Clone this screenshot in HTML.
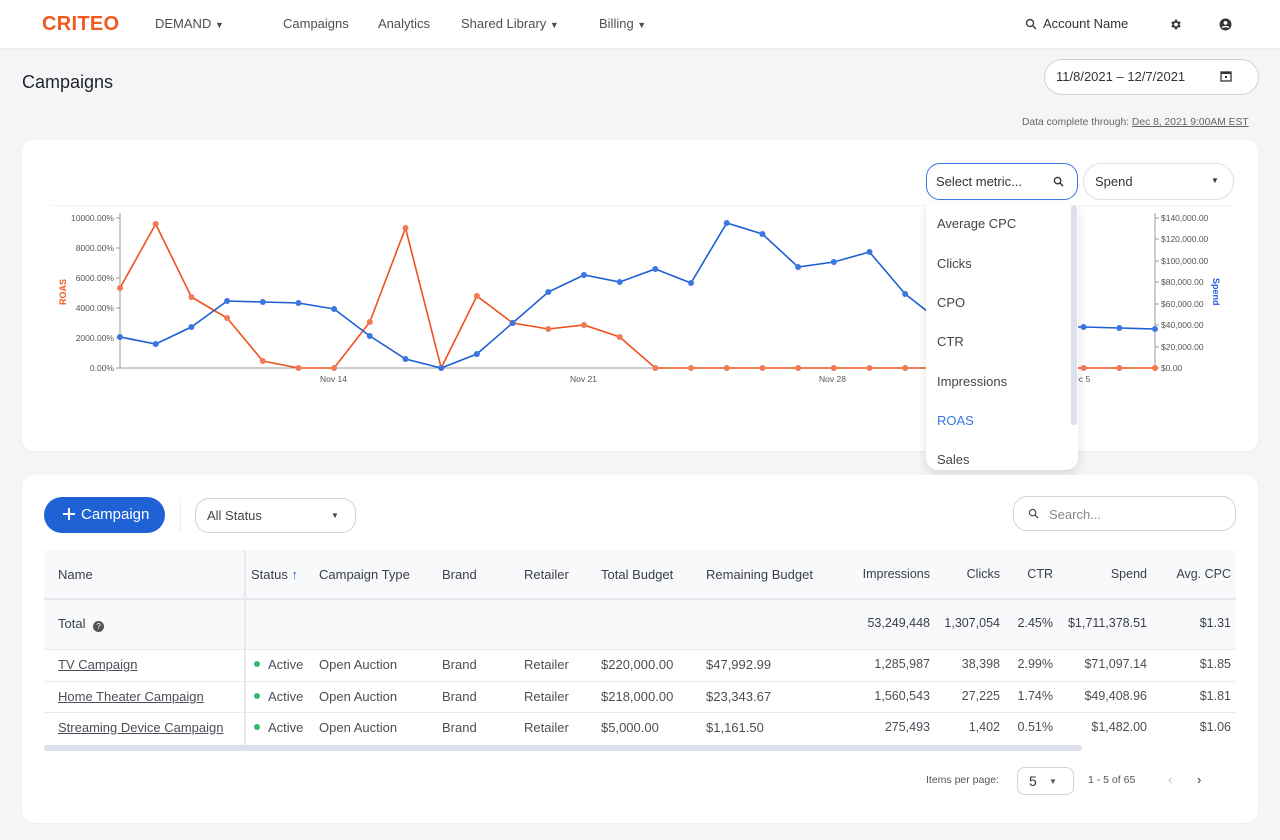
<!DOCTYPE html>
<html><head><meta charset="utf-8"><style>
*{margin:0;padding:0;box-sizing:border-box}
body{width:1280px;height:840px;background:#f4f5f7;font-family:"Liberation Sans",sans-serif;color:#2e3440;position:relative;overflow:hidden;font-size:13px}
.t{position:absolute;white-space:nowrap}
.r{text-align:right;font-size:12.5px}
.card{position:absolute;background:#fff;border-radius:12px;box-shadow:0 1px 2px rgba(0,0,0,.04)}
.u{text-decoration:underline}
.g{color:#4a4f57}
</style></head><body>
<div style="position:absolute;left:0;top:0;width:1280px;height:49px;background:#fff;border-bottom:1px solid #eceef1"></div>
<div class="t" style="left:42px;top:13px;font-size:20px;font-weight:bold;color:#f05a1e;letter-spacing:0.3px">CRITEO</div>
<div class="t g" style="left:155px;top:16px;font-size:13px">DEMAND <span style="font-size:9px">▼</span></div>
<div class="t g" style="left:283px;top:16px">Campaigns</div>
<div class="t g" style="left:378px;top:16px">Analytics</div>
<div class="t g" style="left:461px;top:16px">Shared Library <span style="font-size:9px">▼</span></div>
<div class="t g" style="left:599px;top:16px">Billing <span style="font-size:9px">▼</span></div>
<svg class="t" style="left:1025px;top:18px" width="12" height="12" viewBox="0 0 12 12"><circle cx="5" cy="5" r="3.5" fill="none" stroke="#444" stroke-width="1.4"/><path d="M7.5 7.5L11 11" stroke="#444" stroke-width="1.5"/></svg>
<div class="t" style="left:1043px;top:16px;color:#333">Account Name</div>
<svg class="t" style="left:1169px;top:18px" width="13" height="13" viewBox="0 0 24 24"><path fill="#333" d="M19.4 13a7.5 7.5 0 000-2l2.1-1.6-2-3.5-2.5 1a7 7 0 00-1.7-1L14.9 3h-4l-.4 2.9a7 7 0 00-1.7 1l-2.5-1-2 3.5L6.4 11a7.5 7.5 0 000 2l-2.1 1.6 2 3.5 2.5-1a7 7 0 001.7 1l.4 2.9h4l.4-2.9a7 7 0 001.7-1l2.5 1 2-3.5zM12.9 15.5a3.5 3.5 0 110-7 3.5 3.5 0 010 7z"/></svg>
<svg class="t" style="left:1219px;top:18px" width="13" height="13" viewBox="0 0 24 24"><circle cx="12" cy="12" r="11" fill="#333"/><circle cx="12" cy="9" r="3.5" fill="#fff"/><path d="M5.5 18c2-3 11-3 13 0" stroke="#fff" stroke-width="2.5" fill="none"/></svg>

<div class="t" style="left:22px;top:72px;font-size:18px;color:#1f2328">Campaigns</div>
<div class="t" style="left:1044px;top:59px;width:215px;height:36px;border:1px solid #cfd3d9;border-radius:18px;background:#fff"></div>
<div class="t" style="left:1056px;top:69px;color:#333">11/8/2021 – 12/7/2021</div>
<svg class="t" style="left:1220px;top:70px" width="12" height="12" viewBox="0 0 12 12"><rect x="1" y="2" width="10" height="9" fill="none" stroke="#333" stroke-width="1.3"/><rect x="1" y="2" width="10" height="2" fill="#333"/><rect x="5" y="6" width="2" height="2" fill="#333"/></svg>
<div class="t" style="left:1022px;top:117px;font-size:10.3px;color:#666">Data complete through: <span class="u">Dec 8, 2021 9:00AM EST</span></div>

<div class="card" style="left:22px;top:140px;width:1236px;height:311px"></div>
<div class="t" style="left:1083px;top:163px;width:151px;height:37px;border:1px solid #dde0e6;border-radius:18px;background:#fff"></div>
<div class="t" style="left:1095px;top:174px;color:#333">Spend</div>
<div class="t" style="left:1211px;top:176px;font-size:8px;color:#333">▼</div>
<div class="t" style="left:52px;top:205px;width:1180px;height:1px;background:#f0f1f4"></div>
<svg class="t" style="left:0;top:0" width="1280" height="840">
<g font-family="Liberation Sans" font-size="8.5" fill="#555">
<line x1="120" y1="213" x2="120" y2="368" stroke="#999"/>
<line x1="120" y1="368" x2="1155" y2="368" stroke="#999"/>
<line x1="1155" y1="213" x2="1155" y2="368" stroke="#999"/>
<g text-anchor="end">
<text x="114" y="221">10000.00%</text><text x="114" y="251">8000.00%</text><text x="114" y="281">6000.00%</text><text x="114" y="311">4000.00%</text><text x="114" y="341">2000.00%</text><text x="114" y="371">0.00%</text></g>
<g stroke="#999"><line x1="116" y1="218" x2="120" y2="218"/><line x1="116" y1="248" x2="120" y2="248"/><line x1="116" y1="278" x2="120" y2="278"/><line x1="116" y1="308" x2="120" y2="308"/><line x1="116" y1="338" x2="120" y2="338"/><line x1="116" y1="368" x2="120" y2="368"/>
<line x1="1155" y1="218" x2="1159" y2="218"/><line x1="1155" y1="239" x2="1159" y2="239"/><line x1="1155" y1="261" x2="1159" y2="261"/><line x1="1155" y1="282" x2="1159" y2="282"/><line x1="1155" y1="304" x2="1159" y2="304"/><line x1="1155" y1="325" x2="1159" y2="325"/><line x1="1155" y1="347" x2="1159" y2="347"/><line x1="1155" y1="368" x2="1159" y2="368"/></g>
<text x="1161" y="221">$140,000.00</text><text x="1161" y="242">$120,000.00</text><text x="1161" y="264">$100,000.00</text><text x="1161" y="285">$80,000.00</text><text x="1161" y="307">$60,000.00</text><text x="1161" y="328">$40,000.00</text><text x="1161" y="350">$20,000.00</text><text x="1161" y="371">$0.00</text>
<text x="320" y="382">Nov 14</text><text x="570" y="382">Nov 21</text><text x="819" y="382">Nov 28</text><text x="1068" y="382">Dec 5</text>
<text transform="translate(66,305) rotate(-90)" fill="#f05a1e" font-weight="bold" font-size="9">ROAS</text>
<text transform="translate(1213,278) rotate(90)" fill="#1f5fd6" font-weight="bold" font-size="9">Spend</text>
</g>
<polyline fill="none" stroke="#f0501e" stroke-width="1.6" points="120,288 155.7,224 191.4,297 227.1,318 262.8,361 298.4,368 334.1,368 369.8,322 405.5,228 441.2,368 476.9,296 512.6,323 548.3,329 584,325 619.7,337 655.3,368 1155,368"/>
<g fill="#f07a55">
<circle cx="120" cy="288" r="3"/><circle cx="155.7" cy="224" r="3"/><circle cx="191.4" cy="297" r="3"/><circle cx="227.1" cy="318" r="3"/><circle cx="262.8" cy="361" r="3"/><circle cx="298.4" cy="368" r="3"/><circle cx="334.1" cy="368" r="3"/><circle cx="369.8" cy="322" r="3"/><circle cx="405.5" cy="228" r="3"/><circle cx="441.2" cy="368" r="3"/><circle cx="476.9" cy="296" r="3"/><circle cx="512.6" cy="323" r="3"/><circle cx="548.3" cy="329" r="3"/><circle cx="584" cy="325" r="3"/><circle cx="619.7" cy="337" r="3"/><circle cx="655.3" cy="368" r="3"/><circle cx="691" cy="368" r="3"/><circle cx="726.7" cy="368" r="3"/><circle cx="762.4" cy="368" r="3"/><circle cx="798.1" cy="368" r="3"/><circle cx="833.8" cy="368" r="3"/><circle cx="869.5" cy="368" r="3"/><circle cx="905.2" cy="368" r="3"/><circle cx="1083.6" cy="368" r="3"/><circle cx="1119.3" cy="368" r="3"/><circle cx="1155" cy="368" r="3"/></g>
<polyline fill="none" stroke="#1f5fd6" stroke-width="1.6" points="120,337 155.7,344 191.4,327 227.1,301 262.8,302 298.4,303 334.1,309 369.8,336 405.5,359 441.2,368 476.9,354 512.6,323 548.3,292 584,275 619.7,282 655.3,269 691,283 726.7,223 762.4,234 798.1,267 833.8,262 869.5,252 905.2,294 940.9,322 976.6,327 1012.2,327 1047.9,327 1083.6,327 1119.3,328 1155,329"/>
<g fill="#3a78e0">
<circle cx="120" cy="337" r="3"/><circle cx="155.7" cy="344" r="3"/><circle cx="191.4" cy="327" r="3"/><circle cx="227.1" cy="301" r="3"/><circle cx="262.8" cy="302" r="3"/><circle cx="298.4" cy="303" r="3"/><circle cx="334.1" cy="309" r="3"/><circle cx="369.8" cy="336" r="3"/><circle cx="405.5" cy="359" r="3"/><circle cx="441.2" cy="368" r="3"/><circle cx="476.9" cy="354" r="3"/><circle cx="512.6" cy="323" r="3"/><circle cx="548.3" cy="292" r="3"/><circle cx="584" cy="275" r="3"/><circle cx="619.7" cy="282" r="3"/><circle cx="655.3" cy="269" r="3"/><circle cx="691" cy="283" r="3"/><circle cx="726.7" cy="223" r="3"/><circle cx="762.4" cy="234" r="3"/><circle cx="798.1" cy="267" r="3"/><circle cx="833.8" cy="262" r="3"/><circle cx="869.5" cy="252" r="3"/><circle cx="905.2" cy="294" r="3"/><circle cx="1083.6" cy="327" r="3"/><circle cx="1119.3" cy="328" r="3"/><circle cx="1155" cy="329" r="3"/></g>
</svg>
<div class="t" style="left:926px;top:163px;width:152px;height:37px;border:1px solid #3a78e0;border-radius:14px;background:#fff"></div>
<div class="t" style="left:936px;top:174px;color:#333">Select metric...</div>
<svg class="t" style="left:1053px;top:176px" width="11" height="11" viewBox="0 0 12 12"><circle cx="5" cy="5" r="3.5" fill="none" stroke="#333" stroke-width="1.5"/><path d="M7.5 7.5L11 11" stroke="#333" stroke-width="1.6"/></svg>
<div class="t" style="left:926px;top:203px;width:152px;height:267px;background:#fff;border-radius:0 0 12px 12px;box-shadow:0 4px 10px rgba(0,0,0,.12)"></div>
<div class="t" style="left:1071px;top:205px;width:6px;height:220px;background:#dde0ea;border-radius:3px"></div>
<div class="t" style="left:937px;top:216px;color:#444">Average CPC</div>
<div class="t" style="left:937px;top:256px;color:#444">Clicks</div>
<div class="t" style="left:937px;top:295px;color:#444">CPO</div>
<div class="t" style="left:937px;top:334px;color:#444">CTR</div>
<div class="t" style="left:937px;top:374px;color:#444">Impressions</div>
<div class="t" style="left:937px;top:413px;color:#3a78e0">ROAS</div>
<div class="t" style="left:937px;top:452px;color:#444">Sales</div>

<div class="card" style="left:22px;top:475px;width:1236px;height:348px"></div>
<div class="t" style="left:44px;top:497px;width:121px;height:36px;background:#1f62d6;border-radius:18px"></div>
<svg class="t" style="left:62px;top:507px" width="14" height="14" viewBox="0 0 14 14"><path d="M7 1v12M1 7h12" stroke="#fff" stroke-width="2"/></svg>
<div class="t" style="left:81px;top:506px;color:#fff;font-size:15px">Campaign</div>
<div class="t" style="left:180px;top:498px;width:1px;height:34px;background:#eceef1"></div>
<div class="t" style="left:195px;top:498px;width:161px;height:35px;border:1px solid #cfd3d9;border-radius:14px"></div>
<div class="t" style="left:207px;top:508px;color:#444">All Status</div>
<div class="t" style="left:331px;top:511px;font-size:8px;color:#444">▼</div>
<div class="t" style="left:1013px;top:496px;width:223px;height:35px;border:1px solid #cfd3d9;border-radius:14px"></div>
<svg class="t" style="left:1028px;top:508px" width="11" height="11" viewBox="0 0 12 12"><circle cx="5" cy="5" r="3.5" fill="none" stroke="#555" stroke-width="1.4"/><path d="M7.5 7.5L11 11" stroke="#555" stroke-width="1.5"/></svg>
<div class="t" style="left:1049px;top:507px;color:#888">Search...</div>

<div class="t" style="left:44px;top:550px;width:1192px;height:99px;background:#f8f9fa"></div>
<div class="t" style="left:44px;top:598px;width:1192px;height:2px;background:#e3e6ec"></div>
<div class="t" style="left:44px;top:649px;width:1192px;height:1px;background:#e8eaee"></div>
<div class="t" style="left:44px;top:681px;width:1192px;height:1px;background:#e8eaee"></div>
<div class="t" style="left:44px;top:712px;width:1192px;height:1px;background:#e8eaee"></div>
<div class="t" style="left:244px;top:550px;width:2px;height:195px;background:#e6e8ec"></div>
<div class="t" style="left:44px;top:745px;width:1038px;height:6px;background:#dde0ea;border-radius:3px"></div>

<div style="color:#3a3f47">
<div class="t" style="left:58px;top:567px">Name</div>
<div class="t" style="left:251px;top:567px">Status <span style="color:#1f5fd6;font-weight:bold">↑</span></div>
<div class="t" style="left:319px;top:567px">Campaign Type</div>
<div class="t" style="left:442px;top:567px">Brand</div>
<div class="t" style="left:524px;top:567px">Retailer</div>
<div class="t" style="left:601px;top:567px">Total Budget</div>
<div class="t" style="left:706px;top:567px">Remaining Budget</div>
<div class="t r" style="right:350px;top:567px">Impressions</div>
<div class="t r" style="right:280px;top:567px">Clicks</div>
<div class="t r" style="right:227px;top:567px">CTR</div>
<div class="t r" style="right:133px;top:567px">Spend</div>
<div class="t r" style="right:49px;top:567px">Avg. CPC</div>

<div class="t" style="left:58px;top:616px">Total <span style="display:inline-block;width:11px;height:11px;border-radius:50%;background:#555;color:#fff;font-size:8px;text-align:center;line-height:11px;vertical-align:-1px;margin-left:4px">?</span></div>
<div class="t r" style="right:350px;top:616px">53,249,448</div>
<div class="t r" style="right:280px;top:616px">1,307,054</div>
<div class="t r" style="right:227px;top:616px">2.45%</div>
<div class="t r" style="right:133px;top:616px">$1,711,378.51</div>
<div class="t r" style="right:49px;top:616px">$1.31</div>
</div>

<div style="color:#4a4f57">
<div class="t u" style="left:58px;top:657px">TV Campaign</div>
<div class="t u" style="left:58px;top:689px">Home Theater Campaign</div>
<div class="t u" style="left:58px;top:720px">Streaming Device Campaign</div>
<div class="t" style="left:254px;top:657px"><span style="display:inline-block;width:6px;height:6px;border-radius:50%;background:#2ebd6b;vertical-align:2px;margin-right:8px"></span>Active</div>
<div class="t" style="left:254px;top:689px"><span style="display:inline-block;width:6px;height:6px;border-radius:50%;background:#2ebd6b;vertical-align:2px;margin-right:8px"></span>Active</div>
<div class="t" style="left:254px;top:720px"><span style="display:inline-block;width:6px;height:6px;border-radius:50%;background:#2ebd6b;vertical-align:2px;margin-right:8px"></span>Active</div>
<div class="t" style="left:319px;top:657px">Open Auction</div><div class="t" style="left:319px;top:689px">Open Auction</div><div class="t" style="left:319px;top:720px">Open Auction</div>
<div class="t" style="left:442px;top:657px">Brand</div><div class="t" style="left:442px;top:689px">Brand</div><div class="t" style="left:442px;top:720px">Brand</div>
<div class="t" style="left:524px;top:657px">Retailer</div><div class="t" style="left:524px;top:689px">Retailer</div><div class="t" style="left:524px;top:720px">Retailer</div>
<div class="t" style="left:601px;top:657px">$220,000.00</div><div class="t" style="left:601px;top:689px">$218,000.00</div><div class="t" style="left:601px;top:720px">$5,000.00</div>
<div class="t" style="left:706px;top:657px">$47,992.99</div><div class="t" style="left:706px;top:689px">$23,343.67</div><div class="t" style="left:706px;top:720px">$1,161.50</div>
<div class="t r" style="right:350px;top:657px">1,285,987</div><div class="t r" style="right:350px;top:689px">1,560,543</div><div class="t r" style="right:350px;top:720px">275,493</div>
<div class="t r" style="right:280px;top:657px">38,398</div><div class="t r" style="right:280px;top:689px">27,225</div><div class="t r" style="right:280px;top:720px">1,402</div>
<div class="t r" style="right:227px;top:657px">2.99%</div><div class="t r" style="right:227px;top:689px">1.74%</div><div class="t r" style="right:227px;top:720px">0.51%</div>
<div class="t r" style="right:133px;top:657px">$71,097.14</div><div class="t r" style="right:133px;top:689px">$49,408.96</div><div class="t r" style="right:133px;top:720px">$1,482.00</div>
<div class="t r" style="right:49px;top:657px">$1.85</div><div class="t r" style="right:49px;top:689px">$1.81</div><div class="t r" style="right:49px;top:720px">$1.06</div>
</div>

<div class="t" style="left:926px;top:774px;font-size:10.5px;color:#555">Items per page:</div>
<div class="t" style="left:1017px;top:767px;width:57px;height:28px;border:1px solid #cfd3d9;border-radius:8px"></div>
<div class="t" style="left:1029px;top:773px;font-size:14px;color:#333">5</div>
<div class="t" style="left:1049px;top:777px;font-size:8px;color:#555">▼</div>
<div class="t" style="left:1088px;top:774px;font-size:10.5px;color:#555">1 - 5 of 65</div>
<div class="t" style="left:1168px;top:772px;font-size:13px;color:#bbb">‹</div>
<div class="t" style="left:1197px;top:772px;font-size:13px;color:#333">›</div>
</body></html>
